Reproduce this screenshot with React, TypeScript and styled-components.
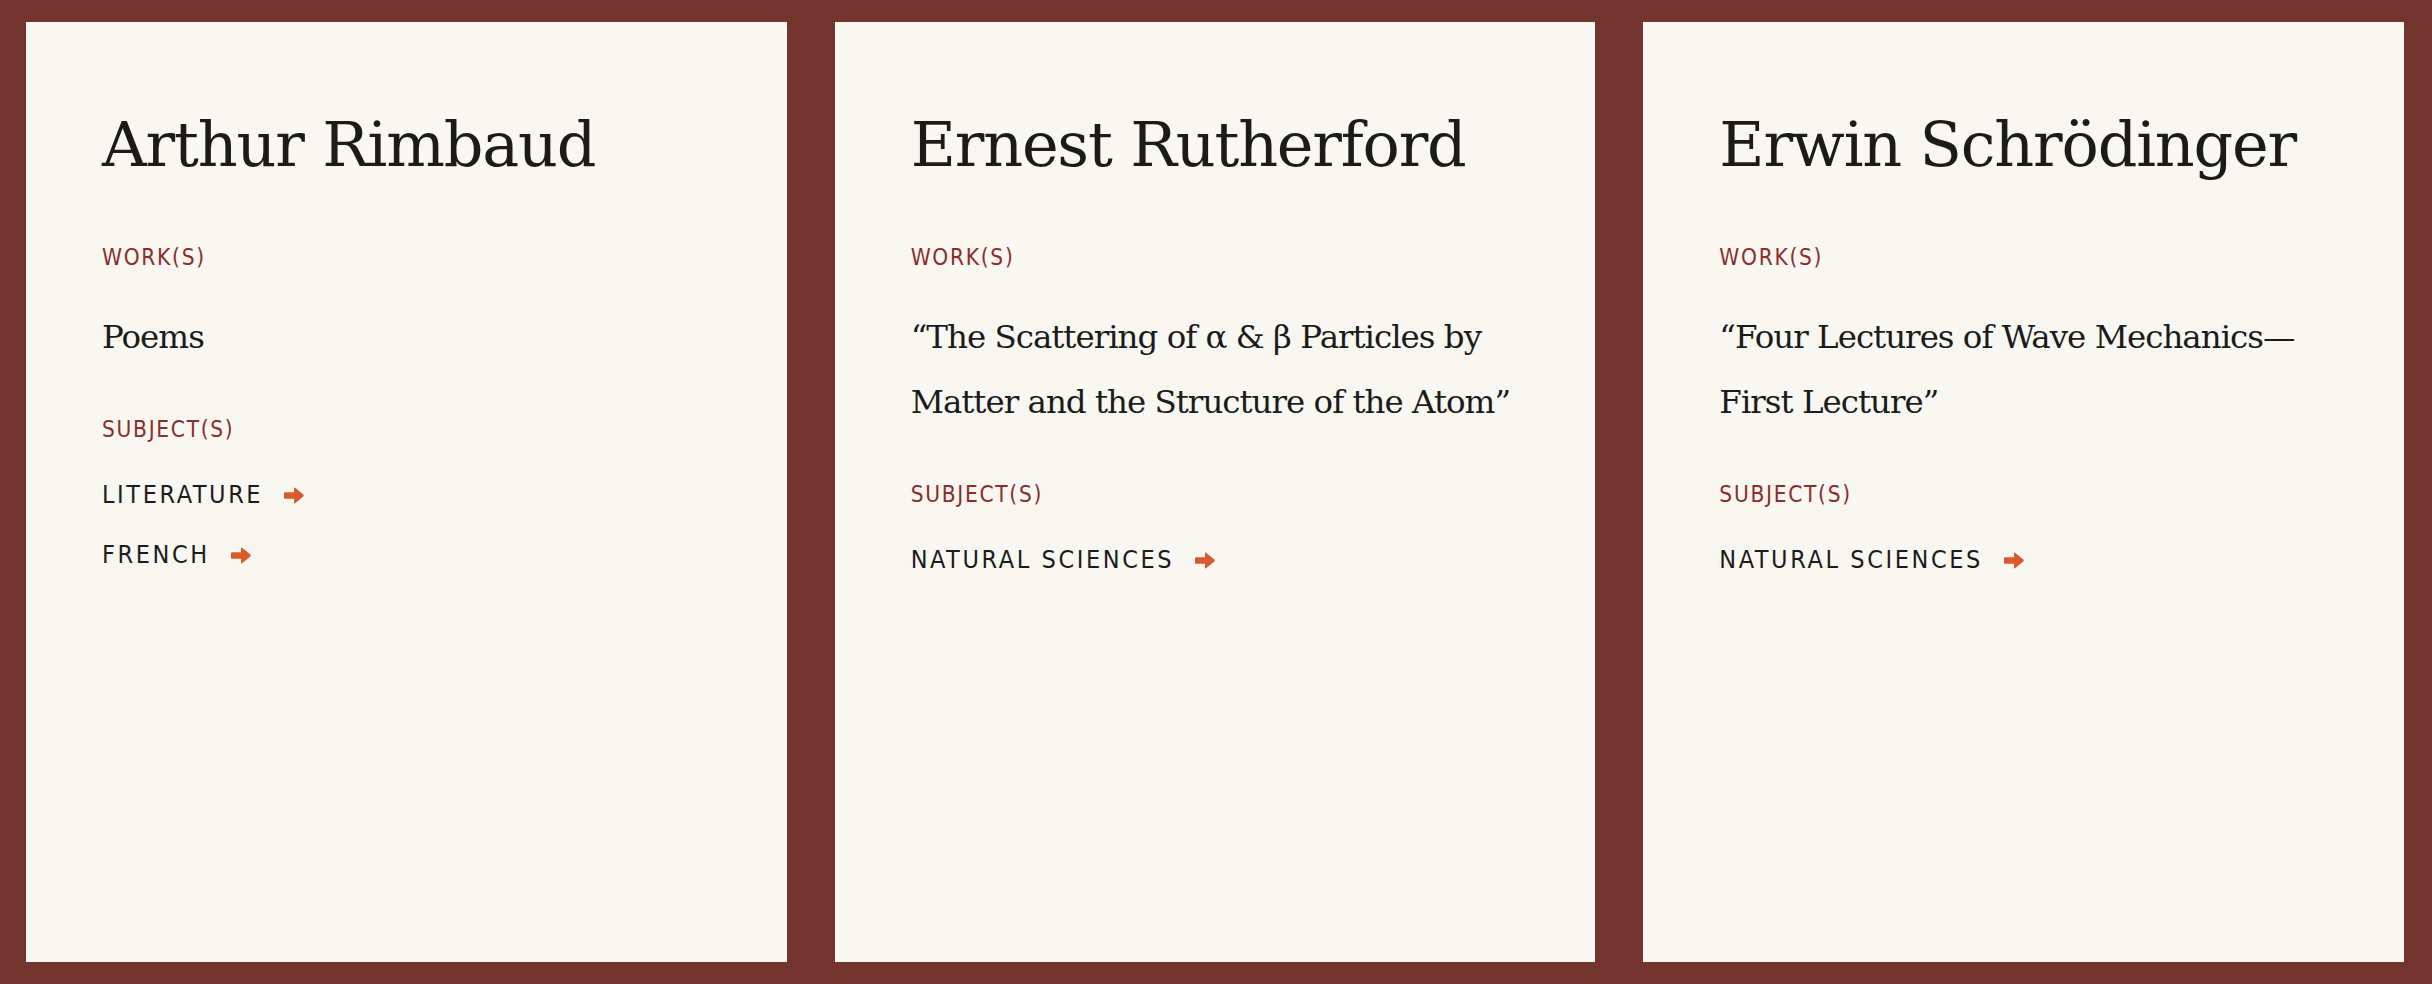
import React from "react";
import styled, { createGlobalStyle } from "styled-components";

const Global = createGlobalStyle`
  html, body { margin: 0; padding: 0; background: #74352e; }
  body { -webkit-font-smoothing: antialiased; }
`;

const Page = styled.main`
  display: grid;
  grid-template-columns: repeat(3, 1fr);
  gap: 48px;
  padding: 22px 28px 22px 26px;
  height: 984px;
  box-sizing: border-box;
  background: #74352e;
`;

const Card = styled.article`
  background: #f8f7f2;
  padding: 83px 50px 0 76px;
  box-sizing: border-box;
  display: flex;
  flex-direction: column;
`;

const Name = styled.h2`
  margin: 0;
  font-family: "DejaVu Serif", "Liberation Serif", serif;
  font-weight: 400;
  font-size: 62px;
  line-height: 80px;
  color: #1c1b1a;
  letter-spacing: -1.2px;
`;

const Label = styled.h3<{ $gap: number }>`
  margin: ${(p) => p.$gap}px 0 0 0;
  font-family: "DejaVu Sans Condensed", "Liberation Sans Narrow", "Roboto Condensed", "Open Sans", sans-serif;
  font-stretch: condensed;
  font-weight: 400;
  font-size: 22.5px;
  line-height: 30px;
  letter-spacing: 1.7px;
  color: #8e2c2a;
  text-transform: uppercase;
`;

const Work = styled.p`
  margin: 33px 0 0 0;
  font-family: "DejaVu Serif", "Liberation Serif", serif;
  font-size: 32.5px;
  line-height: 65px;
  color: #1c1b1a;
  letter-spacing: -1px;
`;

const Links = styled.ul`
  list-style: none;
  margin: 36px 0 0 0;
  padding: 0;
  display: flex;
  flex-direction: column;
  gap: 30px;
`;

const LinkItem = styled.li`
  display: flex;
  align-items: center;
  gap: 21px;
  font-family: "DejaVu Sans Condensed", "Liberation Sans Narrow", "Roboto Condensed", "Open Sans", sans-serif;
  font-stretch: condensed;
  font-size: 25px;
  line-height: 30px;
  letter-spacing: 2.6px;
  color: #1c1b1a;
  text-transform: uppercase;
`;

const Arrow = () => (
  <svg width="20" height="17" viewBox="0 0 20 17" aria-hidden="true">
    <path
      d="M0 6.2 Q0 5.2 1 5.2 H10 V1.2 Q10 0 11 0.8 L19.4 7.6 Q20 8.5 19.4 9.4 L11 16.2 Q10 17 10 15.8 V11.8 H1 Q0 11.8 0 10.8 Z"
      fill="#d95a2c"
    />
  </svg>
);

type Person = { name: string; work: string; subjects: string[] };

const people: Person[] = [
  { name: "Arthur Rimbaud", work: "Poems", subjects: ["Literature", "French"] },
  {
    name: "Ernest Rutherford",
    work: "\u201CThe Scattering of \u03B1 & \u03B2 Particles by Matter and the Structure of the Atom\u201D",
    subjects: ["Natural Sciences"],
  },
  {
    name: "Erwin Schr\u00F6dinger",
    work: "\u201CFour Lectures of Wave Mechanics\u2014 First Lecture\u201D",
    subjects: ["Natural Sciences"],
  },
];

export default function App() {
  return (
    <>
      <Global />
      <Page>
        {people.map((p) => (
          <Card key={p.name}>
            <Name>{p.name}</Name>
            <Label $gap={57}>Work(s)</Label>
            <Work>{p.work}</Work>
            <Label $gap={44}>Subject(s)</Label>
            <Links>
              {p.subjects.map((s) => (
                <LinkItem key={s}>
                  <span>{s}</span>
                  <Arrow />
                </LinkItem>
              ))}
            </Links>
          </Card>
        ))}
      </Page>
    </>
  );
}
